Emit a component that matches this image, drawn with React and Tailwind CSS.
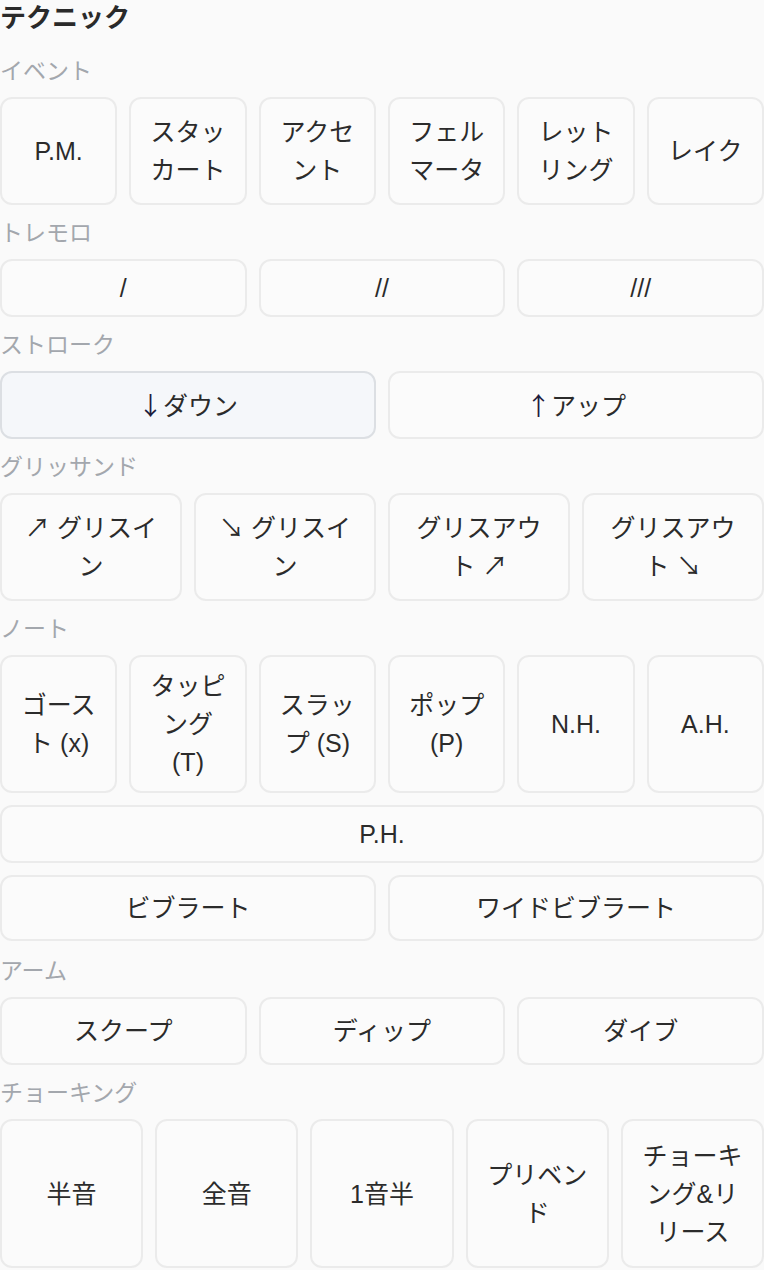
import React, { useState } from "react";

const FONT = { fontFamily: '"Liberation Sans", "Noto Sans CJK JP", sans-serif' };
const CJK = { fontFamily: '"Noto Sans CJK JP", sans-serif' };

function Btn({ children, h, active = false, onClick }) {
    return (
        <button
            onClick={onClick}
            className={`${h} flex items-center justify-center text-center rounded-xl border-2 px-4 text-[25px] leading-[38px] text-[#2b2b2b] ${active
                ? "bg-[#f5f7fa] border-[#dcdfe3]"
                : "bg-[#fbfbfb] border-[#ebebeb]"
                }`}
        >
            <span className="block w-full break-words">{children}</span>
        </button>
    );
}

function Label({ children, mt = "mt-[11px]" }) {
    return (
        <div className={`${mt} mb-[9px] h-[34px] leading-[34px] text-[23px] text-[#a3a7ad]`}>
            {children}
        </div>
    );
}

export default function App() {
    const [stroke, setStroke] = useState("down");

    return (
        <div className="w-[764px] min-h-[1270px] bg-[#fafafa] flex flex-col" style={FONT}>
            <h2 className="text-[26px] leading-[36px] font-bold text-[#2a2a2a]">テクニック</h2>

            {/* イベント */}
            <Label mt="mt-[18px]">イベント</Label>
            <div className="grid grid-cols-6 gap-3">
                <Btn h="h-[108px]">P.M.</Btn>
                <Btn h="h-[108px]">スタッカート</Btn>
                <Btn h="h-[108px]">アクセント</Btn>
                <Btn h="h-[108px]">フェルマータ</Btn>
                <Btn h="h-[108px]">レットリング</Btn>
                <Btn h="h-[108px]">レイク</Btn>
            </div>

            {/* トレモロ */}
            <Label>トレモロ</Label>
            <div className="grid grid-cols-3 gap-3">
                <Btn h="h-[58px]">/</Btn>
                <Btn h="h-[58px]">//</Btn>
                <Btn h="h-[58px]">///</Btn>
            </div>

            {/* ストローク */}
            <Label>ストローク</Label>
            <div className="grid grid-cols-2 gap-3">
                <Btn h="h-[68px]" active={stroke === "down"} onClick={() => setStroke("down")}>
                    <span className="text-[#1c1c3c]" style={CJK}>↓</span>ダウン
                </Btn>
                <Btn h="h-[68px]" active={stroke === "up"} onClick={() => setStroke("up")}>
                    <span className="text-[#1c1c3c]" style={CJK}>↑</span>アップ
                </Btn>
            </div>

            {/* グリッサンド */}
            <Label>グリッサンド</Label>
            <div className="grid grid-cols-4 gap-3">
                <Btn h="h-[108px]">↗ グリスイン</Btn>
                <Btn h="h-[108px]">↘ グリスイン</Btn>
                <Btn h="h-[108px]">グリスアウト ↗</Btn>
                <Btn h="h-[108px]">グリスアウト ↘</Btn>
            </div>

            {/* ノート */}
            <Label>ノート</Label>
            <div className="flex flex-col gap-3">
                <div className="grid grid-cols-6 gap-3">
                    <Btn h="h-[138px]">ゴースト (x)</Btn>
                    <Btn h="h-[138px]">タッピング (T)</Btn>
                    <Btn h="h-[138px]">スラップ (S)</Btn>
                    <Btn h="h-[138px]">ポップ (P)</Btn>
                    <Btn h="h-[138px]">N.H.</Btn>
                    <Btn h="h-[138px]">A.H.</Btn>
                </div>
                <Btn h="h-[58px]">P.H.</Btn>
                <div className="grid grid-cols-2 gap-3">
                    <Btn h="h-[66px]">ビブラート</Btn>
                    <Btn h="h-[66px]">ワイドビブラート</Btn>
                </div>
            </div>

            {/* アーム */}
            <Label mt="mt-[13px]">アーム</Label>
            <div className="grid grid-cols-3 gap-3">
                <Btn h="h-[68px]">スクープ</Btn>
                <Btn h="h-[68px]">ディップ</Btn>
                <Btn h="h-[68px]">ダイブ</Btn>
            </div>

            {/* チョーキング */}
            <Label>チョーキング</Label>
            <div className="grid grid-cols-5 gap-3">
                <Btn h="h-[149px]">半音</Btn>
                <Btn h="h-[149px]">全音</Btn>
                <Btn h="h-[149px]">1音半</Btn>
                <Btn h="h-[149px]">プリベンド</Btn>
                <Btn h="h-[149px]">チョーキング&amp;リリース</Btn>
            </div>
        </div>
    );
}
